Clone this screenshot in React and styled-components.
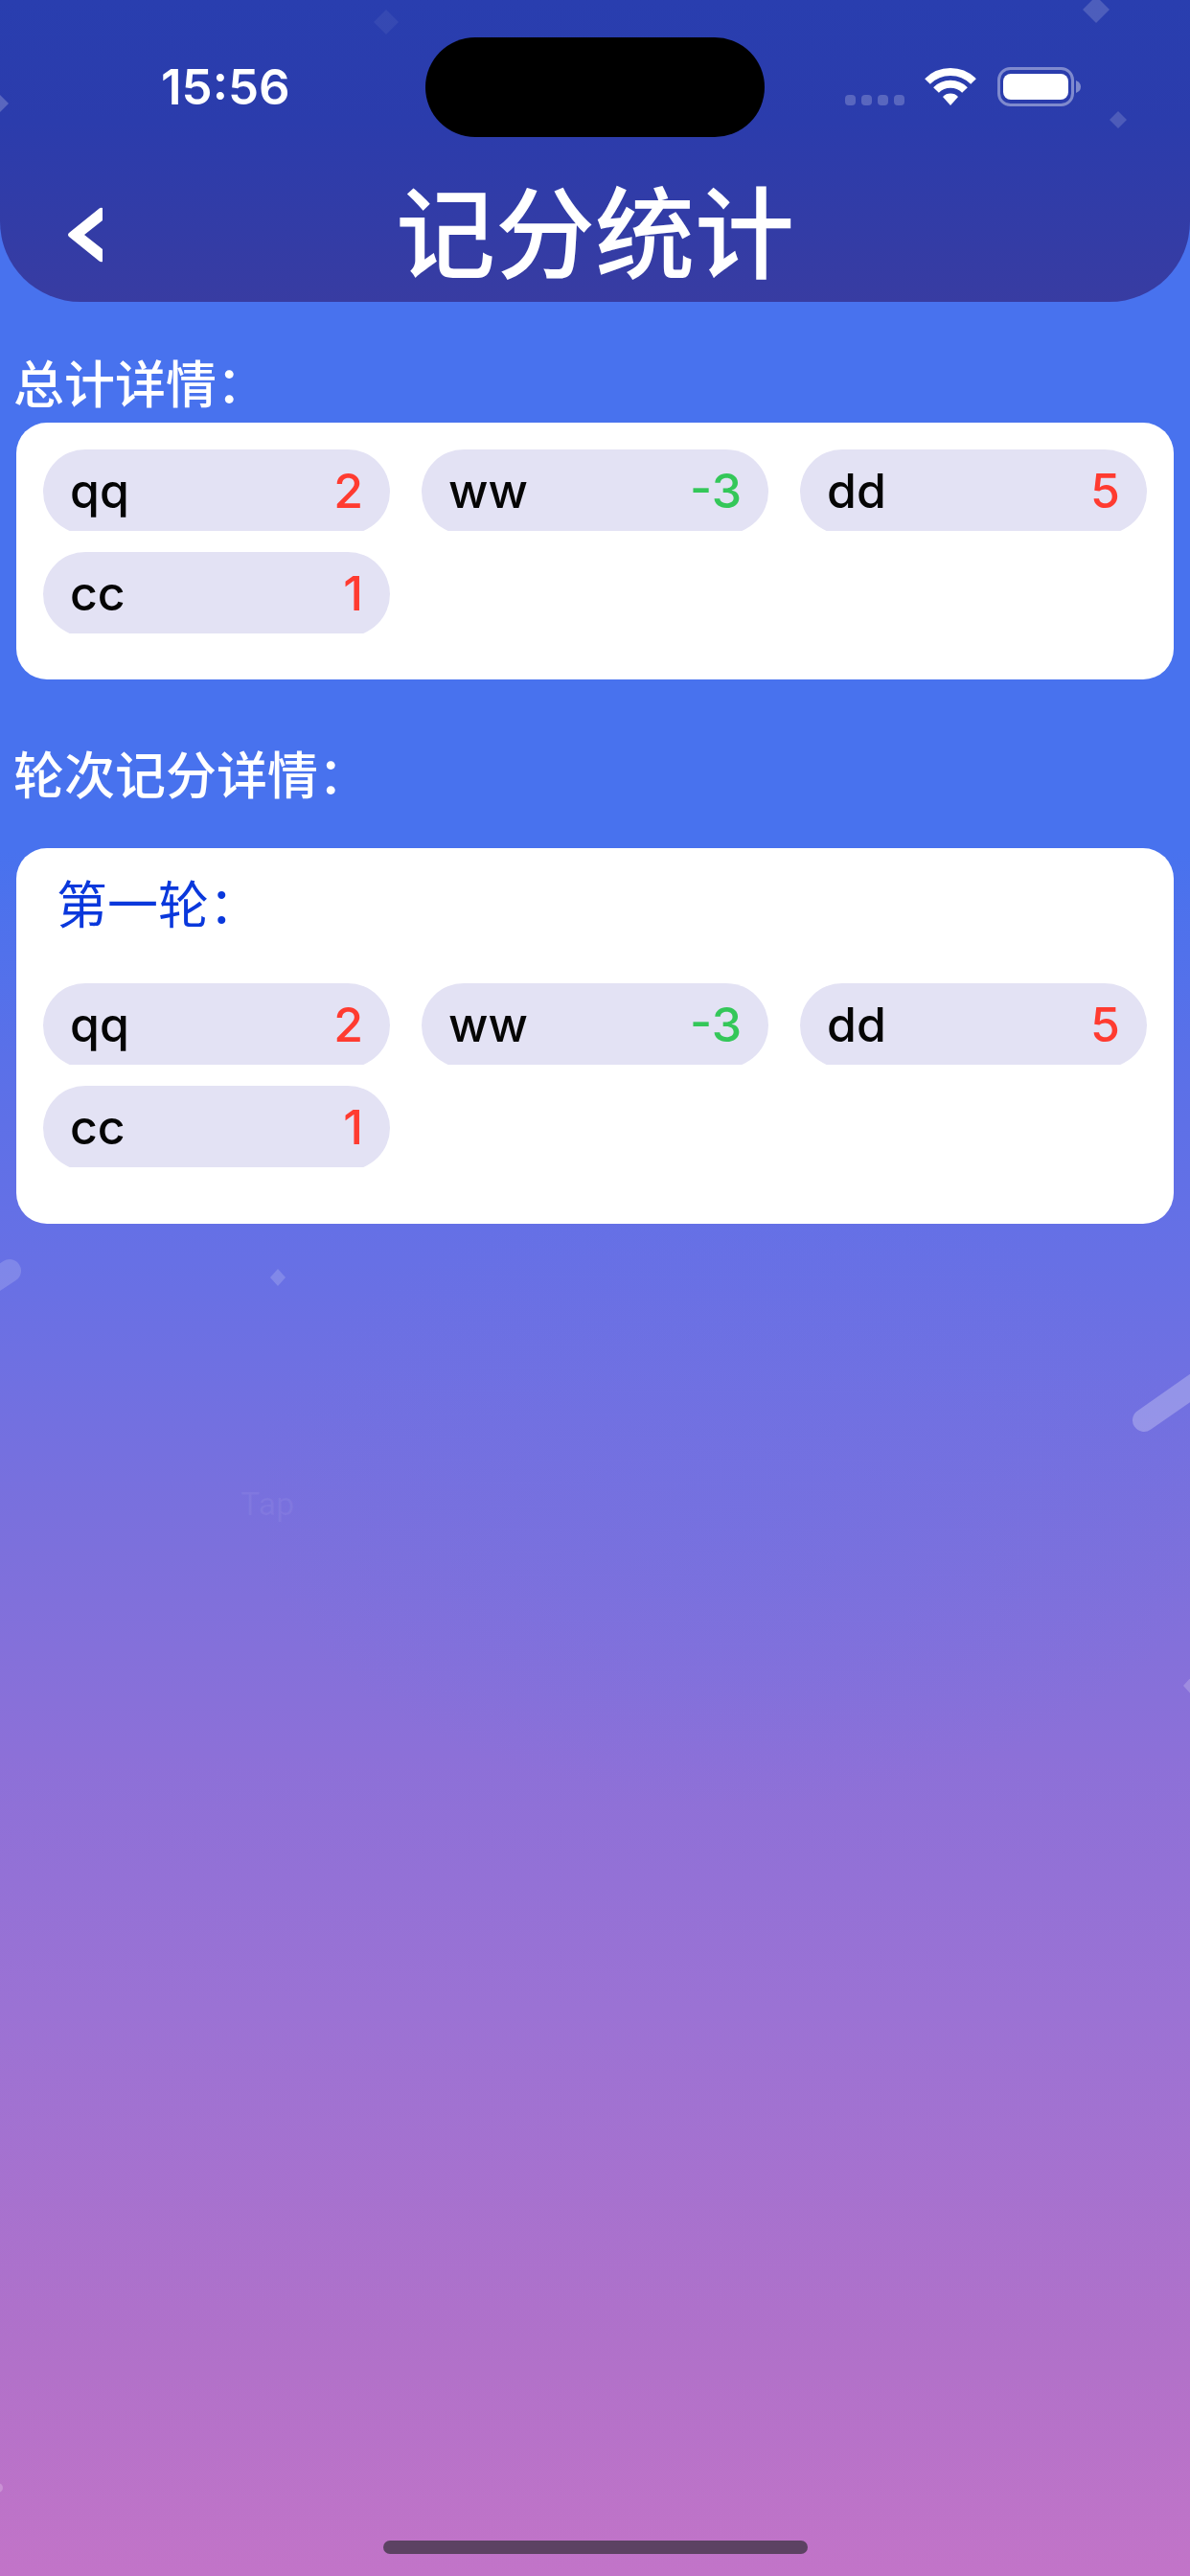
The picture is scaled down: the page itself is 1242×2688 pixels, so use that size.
import React from 'react';
import styled, { createGlobalStyle } from 'styled-components';

const totals = [
  { name: 'qq', score: 2 },
  { name: 'ww', score: -3 },
  { name: 'dd', score: 5 },
  { name: 'cc', score: 1 },
];

const rounds = [{ title: '第一轮：', players: totals }];

const StatusIcons = () => (
  <svg width='248' height='42' viewBox='0 0 248 42' aria-hidden='true'>
    <g fill='#fff' fillOpacity='0.22'>
      <rect x='1' y='29' width='11' height='11' rx='4' />
      <rect x='18' y='29' width='11' height='11' rx='4' />
      <rect x='35' y='29' width='11' height='11' rx='4' />
      <rect x='52' y='29' width='11' height='11' rx='4' />
    </g>
    <g fill='none' stroke='#fff' strokeWidth='8'>
      <path d='M87 15 A34 34 0 0 1 135 15' />
      <path d='M96 24 A21 21 0 0 1 126 24' />
    </g>
    <path fill='#fff' d='M111 40 L103 31 A11 11 0 0 1 119 31 Z' />
    <rect
      x='161.5'
      y='1.5'
      width='77'
      height='38'
      rx='12'
      fill='none'
      stroke='#fff'
      strokeOpacity='0.4'
      strokeWidth='3'
    />
    <rect x='166' y='7' width='68' height='27' rx='8' fill='#fff' />
    <path d='M242 14 Q247 16 247 20.500 Q247 25 242 27 Z' fill='#fff' fillOpacity='0.4' />
  </svg>
);

const Backdrop = () => (
  <BackdropSvg viewBox='0 0 1242 2688' preserveAspectRatio='xMidYMin slice' aria-hidden='true'>
    <g fill='#fff'>
      <path d='M403 10 L416 23 L403 36 L390 23 Z' fillOpacity='0.06' />
      <path d='M0 99 L9 108 L0 117 Z' fillOpacity='0.22' />
      <path d='M1144 -4 L1158 10 L1144 24 L1130 10 Z' fillOpacity='0.17' />
      <path d='M1167 116 L1176 125 L1167 134 L1158 125 Z' fillOpacity='0.16' />
      <path d='M290 1324 L298 1333 L290 1342 L282 1333 Z' fillOpacity='0.17' />
      <path d='M1246 1747 L1258 1759 L1246 1771 L1235 1759 Z' fillOpacity='0.2' />
      <circle cx='-2' cy='2596' r='5' fillOpacity='0.22' />
    </g>
    <g stroke='#fff' strokeWidth='24' strokeLinecap='round'>
      <path d='M10 1326 L-40 1359' strokeOpacity='0.16' />
      <path d='M1194 1482 L1290 1415' strokeOpacity='0.25' />
    </g>
    <text x='251' y='1581' fontSize='34' fontFamily='Roboto, sans-serif' fill='#fff'>
      <tspan fillOpacity='0.06'>Tap </tspan>
      <tspan fillOpacity='0.02'>the</tspan>
    </text>
  </BackdropSvg>
);

const Scores = ({ players }) => (
  <ScoreList>
    {players.map(({ name, score }) => (
      <Slot key={name}>
        <Pill>
          <span>{name}</span>
          <Score $negative={score < 0}>{score}</Score>
        </Pill>
      </Slot>
    ))}
  </ScoreList>
);

const App = () => {
  return (
    <Page>
      <GlobalStyle />
      <Header>
        <StatusBar>
          <Time>15:56</Time>
          <Island />
          <StatusIcons />
        </StatusBar>
        <Nav>
          <BackButton type='button' aria-label='返回'>
            <svg width='38' height='58' viewBox='0 0 38 58' aria-hidden='true'>
              <path
                d='M37 1 V14 L18 29 L37 44 V57 Q35 58 33 56 L2 31 Q0 29 2 27 L33 2 Q35 0 37 1 Z'
                fill='#fff'
              />
            </svg>
          </BackButton>
          <h1>记分统计</h1>
        </Nav>
      </Header>
      <main>
        <Heading>总计详情：</Heading>
        <Card>
          <Scores players={totals} />
        </Card>
        <Heading $spaced>轮次记分详情：</Heading>
        {rounds.map(({ title, players }) => (
          <Card key={title} $round>
            <h3>{title}</h3>
            <Scores players={players} />
          </Card>
        ))}
      </main>
      <HomeIndicator />
      <Backdrop />
    </Page>
  );
};

const GlobalStyle = createGlobalStyle`
  * {
    box-sizing: border-box;
    margin: 0;
    padding: 0;
  }
  body {
    font-family: Inter, 'Noto Sans CJK SC', sans-serif;
    color: #050505;
  }
`;

const Page = styled.div`
  position: relative;
  display: flex;
  flex-direction: column;
  min-height: 100vh;
  overflow: hidden;
  background:
    radial-gradient(ellipse 42% 12% at 62% 58%, rgba(110, 114, 228, 0.4), rgba(110, 114, 228, 0)),
    linear-gradient(
      #4872ee 0%,
      #4872ee 33%,
      #5a70e8 41%,
      #6770e5 49%,
      #7c70dc 60%,
      #8c70d8 68%,
      #9b72d4 78%,
      #b271c9 92%,
      #c274c8 100%
    );
`;

const BackdropSvg = styled.svg`
  position: absolute;
  inset: 0;
  width: 100%;
  height: 100%;
  pointer-events: none;
`;

const Header = styled.header`
  border-radius: 0 0 84px 84px;
  background: linear-gradient(#293eaf, #2b3cac 40%, #383ca2);
  color: #fff;
`;

const StatusBar = styled.div`
  display: grid;
  grid-template-columns: 1fr 354px 1fr;
  align-items: center;
  padding-top: 39px;
  > svg {
    justify-self: end;
    margin-right: 113px;
  }
`;

const Time = styled.time`
  padding-left: 168px;
  font-size: 51px;
  font-weight: 600;
  line-height: 60px;
`;

const Island = styled.div`
  height: 104px;
  border-radius: 52px;
  background: #000;
`;

const Nav = styled.nav`
  display: grid;
  grid-template-columns: 1fr auto 1fr;
  align-items: center;
  height: 172px;
  padding: 31px 70px 0;
  h1 {
    font-size: 104px;
    font-weight: 500;
    line-height: 120px;
  }
`;

const BackButton = styled.button`
  display: flex;
  justify-self: start;
  border: 0;
  background: none;
  cursor: pointer;
`;

const Heading = styled.h2`
  padding: ${({ $spaced }) => ($spaced ? '69px 14px 43px' : '55px 14px 7px')};
  color: #fff;
  font-size: 53px;
  font-weight: 500;
  line-height: 64px;
`;

const Card = styled.section`
  margin: 0 17px;
  padding: ${({ $round }) => ($round ? '28px 28px 59px' : '28px 28px 48px')};
  border-radius: 32px;
  background: #fff;
  h3 {
    margin-bottom: 49px;
    padding-left: 14px;
    color: #0a38dc;
    font-size: 53px;
    font-weight: 400;
    line-height: 64px;
  }
`;

const ScoreList = styled.ul`
  display: grid;
  grid-template-columns: repeat(3, 1fr);
  gap: 22px 33px;
  list-style: none;
`;

/* the slot is a little shorter than the pill and trims its bottom edge */
const Slot = styled.li`
  height: 85px;
  overflow: hidden;
`;

const Pill = styled.div`
  display: flex;
  align-items: center;
  justify-content: space-between;
  height: 88px;
  padding: 0 28px 3px;
  border-radius: 44px;
  background: #e3e2f4;
  font-size: 50px;
  font-weight: 500;
  line-height: 60px;
`;

const Score = styled.span`
  color: ${({ $negative }) => ($negative ? '#34c759' : '#ff3b30')};
`;

const HomeIndicator = styled.div`
  width: 443px;
  height: 14px;
  margin: auto auto 23px;
  border-radius: 7px;
  background: #5c4263;
`;

export default App;
